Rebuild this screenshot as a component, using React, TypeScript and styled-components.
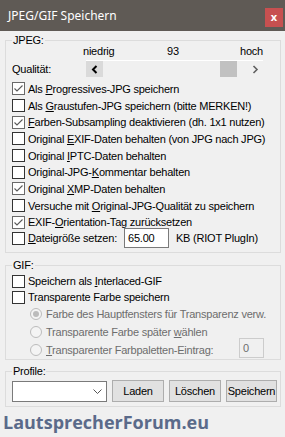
import React from "react";
import styled, { createGlobalStyle } from "styled-components";

const Global = createGlobalStyle`
  html, body { margin: 0; padding: 0; background: #f0f0f0; }
  body {
    font-family: "Liberation Sans", Arial, sans-serif;
    font-size: 11px;
    letter-spacing: -0.22px;
    color: #000;
  }
  * { box-sizing: border-box; }
`;

const Window = styled.div`
  width: 285px;
  height: 437px;
  background: #f0f0f0;
  display: flex;
  flex-direction: column;
  overflow: hidden;
`;

const TitleBar = styled.div`
  height: 31px;
  flex: none;
  background: #5f5a55;
  display: flex;
  align-items: center;
  justify-content: space-between;
  padding: 0 2px 0 8px;
`;

const Title = styled.div`
  color: #fff;
  font-family: "Noto Sans", "Open Sans", sans-serif;
  font-size: 12px;
  letter-spacing: 0;
`;

const CloseButton = styled.div`
  width: 18px;
  height: 19px;
  margin-top: 4px;
  background: #c75050;
  color: #fff;
  display: flex;
  align-items: center;
  justify-content: center;
  font-family: "Noto Sans", sans-serif;
  font-size: 11px;
  font-weight: bold;
  letter-spacing: 0;
  line-height: 1;
  padding-bottom: 2px;
`;

const Body = styled.div`
  display: flex;
  flex-direction: column;
  padding: 3px 4px 0 5px;
`;

const Group = styled.fieldset<{ $gap?: number; $pb?: number }>`
  margin: ${(p) => p.$gap ?? 0}px 0 0 0;
  min-width: 0;
  border: 1px solid #dcdcdc;
  padding: 0 3px ${(p) => p.$pb ?? 0}px 6px;
`;

const Legend = styled.legend`
  padding: 0 1px;
  line-height: 12px;
  font-size: 11px;
`;

const ScaleRow = styled.div`
  display: grid;
  grid-template-columns: 1fr auto 1fr;
  height: 13px;
  line-height: 13px;
  margin: -1px 14px 2px 71px;
`;

const ScaleLabel = styled.span<{ $align: "start" | "center" | "end" }>`
  justify-self: ${(p) => p.$align};
`;

const ScrollRow = styled.div`
  display: flex;
  align-items: center;
  height: 17px;
`;

const FieldLabel = styled.span`
  width: 74px;
  flex: none;
`;

const ScrollBar = styled.div`
  width: 177px;
  height: 17px;
  display: flex;
  background: #f0f0f0;
  border-top: 1px solid #fff;
`;

const ArrowButton = styled.div<{ $active?: boolean }>`
  width: 17px;
  height: 16px;
  flex: none;
  display: flex;
  align-items: center;
  justify-content: center;
  background: ${(p) => (p.$active ? "#dadada" : "transparent")};
`;

const Track = styled.div`
  flex: 1;
  display: flex;
`;

const Thumb = styled.div`
  width: 17px;
  height: 16px;
  background: #c1c1c1;
`;

const Rows = styled.div<{ $mt?: number }>`
  display: flex;
  flex-direction: column;
  margin-top: ${(p) => p.$mt ?? 0}px;
`;

const Row = styled.div<{ $h?: number; $indent?: number; $mt?: number }>`
  display: flex;
  align-items: center;
  height: ${(p) => p.$h ?? 17}px;
  margin-top: ${(p) => p.$mt ?? 0}px;
  padding-left: ${(p) => p.$indent ?? 0}px;
  white-space: nowrap;
`;

const Box = styled.span<{ $checked?: boolean }>`
  width: 13px;
  height: 13px;
  flex: none;
  border: 1px solid ${(p) => (p.$checked ? "#6a6a6a" : "#333")};
  background: #fff;
  margin-right: 3px;
  display: flex;
  align-items: center;
  justify-content: center;
`;

const Radio = styled.span<{ $checked?: boolean }>`
  width: 12px;
  height: 12px;
  flex: none;
  border-radius: 50%;
  border: 1px solid #bcbcbc;
  background: #f4f4f4;
  margin-right: 4px;
  display: flex;
  align-items: center;
  justify-content: center;
  &::after {
    content: "";
    display: ${(p) => (p.$checked ? "block" : "none")};
    width: 6px;
    height: 6px;
    border-radius: 50%;
    background: #bcbcbc;
  }
`;

const Text = styled.span<{ $disabled?: boolean }>`
  color: ${(p) => (p.$disabled ? "#6d6d6d" : "#000")};
`;

const SizeLabel = styled.span`
  width: 96px;
  flex: none;
`;

const TextInput = styled.div<{ $w: number; $disabled?: boolean }>`
  width: ${(p) => p.$w}px;
  height: 20px;
  flex: none;
  border: 1px solid ${(p) => (p.$disabled ? "#cccccc" : "#7a7a7a")};
  background: ${(p) => (p.$disabled ? "#f0f0f0" : "#fff")};
  color: ${(p) => (p.$disabled ? "#6d6d6d" : "#000")};
  padding: 0 3px;
  line-height: 18px;
`;

const Unit = styled.span`
  margin-left: 7px;
`;

const TailInput = styled(TextInput)`
  margin-left: auto;
  margin-right: 13px;
  align-self: flex-start;
  margin-top: -3px;
`;

const ProfileRow = styled.div`
  display: flex;
  align-items: center;
  gap: 5px;
  height: 22px;
  margin-top: 3px;
`;

const Combo = styled.div`
  width: 95px;
  height: 21px;
  margin-top: 1px;
  border: 1px solid #7a7a7a;
  background: #fff;
  display: flex;
  align-items: center;
  justify-content: flex-end;
  padding-right: 4px;
`;

const Button = styled.div<{ $w: number }>`
  width: ${(p) => p.$w}px;
  height: 22px;
  background: #e1e1e1;
  border: 1px solid #adadad;
  display: flex;
  align-items: center;
  justify-content: center;
`;

const Watermark = styled.div`
  margin: 4px 0 0 -2px;
  font-family: "Open Sans", "Noto Sans", sans-serif;
  font-weight: bold;
  font-size: 18px;
  letter-spacing: 0;
  line-height: 22px;
  color: #5a6a8a;
`;

const Check = () => (
  <svg width="11" height="11" viewBox="0 0 11 11">
    <polyline points="1.5,5.5 4,8 9.5,2.5" fill="none" stroke="#5a5a5a" strokeWidth="1.1" />
  </svg>
);

const Chevron = ({ dir, color, bold }: { dir: "left" | "right"; color: string; bold?: boolean }) => (
  <svg width="8" height="9" viewBox="0 0 8 9">
    <polyline
      points={dir === "left" ? "5.5,1 2,4.5 5.5,8" : "2.5,1 6,4.5 2.5,8"}
      fill="none"
      stroke={color}
      strokeWidth={bold ? 2 : 1.6}
    />
  </svg>
);

type CB = { label: React.ReactNode; checked?: boolean; h: number };

const jpegOptions: CB[] = [
  { label: <>Als <u>P</u>rogressives-JPG speichern</>, checked: true, h: 17 },
  { label: <>Als <u>G</u>raustufen-JPG speichern (bitte MERKEN!)</>, h: 17 },
  { label: <><u>F</u>arben-Subsampling deaktivieren (dh. 1x1 nutzen)</>, checked: true, h: 16 },
  { label: <>Original <u>E</u>XIF-Daten behalten (von JPG nach JPG)</>, h: 17 },
  { label: <>Original <u>I</u>PTC-Daten behalten</>, h: 17 },
  { label: <>Original-JPG-<u>K</u>ommentar behalten</>, h: 16 },
  { label: <>Original <u>X</u>MP-Daten behalten</>, checked: true, h: 17 },
  { label: <>Versuche mit <u>O</u>riginal-JPG-Qualität zu speichern</>, h: 17 },
  { label: <>EXIF-<u>O</u>rientation-Tag zurücksetzen</>, checked: true, h: 16 },
];

const quality = 93;
const thumbOffset = Math.round((143 - 17) * (quality - 1) / 99);

export default function App() {
  return (
    <>
      <Global />
      <Window>
        <TitleBar>
          <Title>JPEG/GIF Speichern</Title>
          <CloseButton>x</CloseButton>
        </TitleBar>
        <Body>
          <Group $pb={4}>
            <Legend>JPEG:</Legend>
            <ScaleRow>
              <ScaleLabel $align="start">niedrig</ScaleLabel>
              <ScaleLabel $align="center">{quality}</ScaleLabel>
              <ScaleLabel $align="end">hoch</ScaleLabel>
            </ScaleRow>
            <ScrollRow>
              <FieldLabel>Qualität:</FieldLabel>
              <ScrollBar>
                <ArrowButton $active>
                  <Chevron dir="left" color="#000" bold />
                </ArrowButton>
                <Track>
                  <Thumb style={{ marginLeft: thumbOffset }} />
                </Track>
                <ArrowButton>
                  <Chevron dir="right" color="#606060" />
                </ArrowButton>
              </ScrollBar>
            </ScrollRow>
            <Rows $mt={3}>
              {jpegOptions.map((o, i) => (
                <Row key={i} $h={o.h}>
                  <Box $checked={o.checked}>{o.checked && <Check />}</Box>
                  <Text>{o.label}</Text>
                </Row>
              ))}
              <Row $h={20} $mt={-2}>
                <Box />
                <SizeLabel>
                  <u>D</u>ateigröße setzen:
                </SizeLabel>
                <TextInput $w={45}>65.00</TextInput>
                <Unit>KB (RIOT PlugIn)</Unit>
              </Row>
            </Rows>
          </Group>

          <Group $gap={6}>
            <Legend>GIF:</Legend>
            <Rows $mt={2}>
              <Row $h={16}>
                <Box />
                <Text>
                  Speichern als <u>I</u>nterlaced-GIF
                </Text>
              </Row>
              <Row $h={16}>
                <Box />
                <Text>Transparente Farbe speichern</Text>
              </Row>
              <Row $h={18} $indent={18}>
                <Radio $checked />
                <Text $disabled>Farbe des Hauptfensters für Transparenz verw.</Text>
              </Row>
              <Row $h={18} $indent={18}>
                <Radio />
                <Text $disabled>
                  Transparente Farbe später <u>w</u>ählen
                </Text>
              </Row>
              <Row $h={18} $indent={18}>
                <Radio />
                <Text $disabled>
                  <u>T</u>ransparenter Farbpaletten-Eintrag:
                </Text>
                <TailInput $w={25} $disabled>
                  0
                </TailInput>
              </Row>
            </Rows>
          </Group>

          <Group $gap={5} $pb={4}>
            <Legend>Profile:</Legend>
            <ProfileRow>
              <Combo>
                <svg width="9" height="6" viewBox="0 0 9 6">
                  <polyline points="0.5,0.5 4.5,4.5 8.5,0.5" fill="none" stroke="#555" strokeWidth="1" />
                </svg>
              </Combo>
              <Button $w={52}>Laden</Button>
              <Button $w={52}>Löschen</Button>
              <Button $w={51}>Speichern</Button>
            </ProfileRow>
          </Group>

          <Watermark>LautsprecherForum.eu</Watermark>
        </Body>
      </Window>
    </>
  );
}
